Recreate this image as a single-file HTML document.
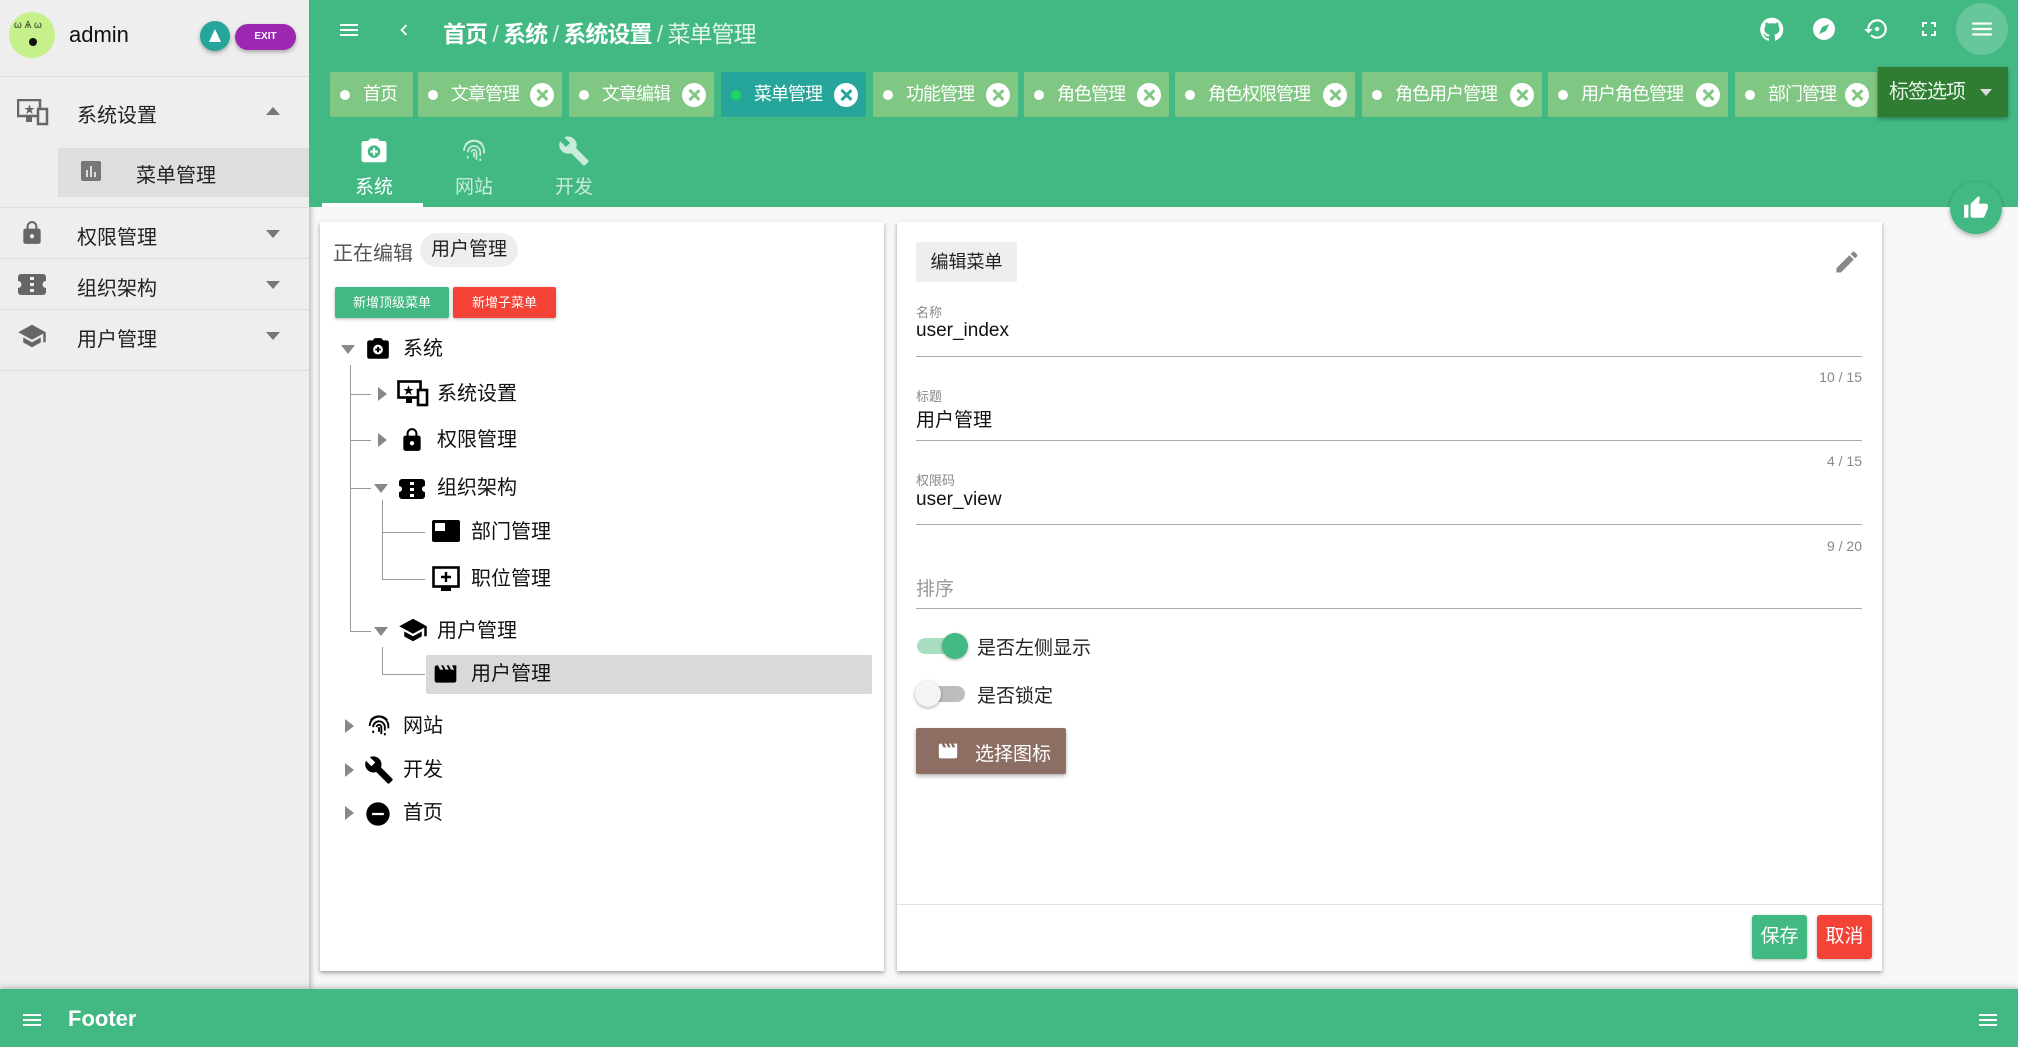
<!DOCTYPE html>
<html><head><meta charset="utf-8">
<style>
*{box-sizing:border-box;margin:0;padding:0}
body{width:2018px;height:1047px;overflow:hidden;background:#f7f7f7;font-family:"Liberation Sans","Noto Sans CJK SC",sans-serif;position:relative;color:#222}
.a{position:absolute}
.side{left:0;top:0;width:309px;height:989px;background:#eeeeee;box-shadow:2px 0 5px rgba(0,0,0,.25)}
.hdr{left:309px;top:0;width:1709px;height:207px;background:#42b883}
.tab{position:absolute;top:72px;height:45px;background:#81c784;color:#fff;font-size:18px;line-height:45px;padding-left:33px;border-radius:2px;letter-spacing:-1px;white-space:nowrap}
.tab:before{content:"";position:absolute;left:10px;top:18px;width:10px;height:10px;border-radius:50%;background:#fff}
.tab .x{position:absolute;right:8px;top:11px;width:24px;height:24px;border-radius:50%;background:#fff}
.tab .x:before,.tab .x:after{content:"";position:absolute;left:11px;top:5px;width:2.5px;height:14px;background:#81c784;transform:rotate(45deg)}
.tab .x:after{transform:rotate(-45deg)}
.tab.act{background:#26a69a}.tab.act:before{background:#1ed760}
.tab.act .x:before,.tab.act .x:after{background:#26a69a}
.card{background:#fff;box-shadow:0 2px 4px rgba(0,0,0,.35)}
.sm{font-size:20px;color:#222}
.tr{position:absolute;font-size:20px;color:#111;line-height:28px}
.ln{position:absolute;background:#999}
.arr{position:absolute;width:0;height:0}
.ad{border-left:7px solid transparent;border-right:7px solid transparent;border-top:9px solid #888}
.ar{border-top:7px solid transparent;border-bottom:7px solid transparent;border-left:9px solid #888}
.lbl{position:absolute;left:916px;font-size:13px;color:#888}
.val{position:absolute;left:916px;font-size:19px;color:#111}
.ul{position:absolute;left:916px;width:946px;height:1px;background:#aaa}
.cnt{position:absolute;right:156px;font-size:14px;color:#888}
</style></head><body>

<div class="a side"></div>
<div class="a" style="left:9px;top:12px;width:46px;height:46px;border-radius:50%;background:#c5f08a"></div>
<div class="a" style="left:29px;top:38px;width:8px;height:8px;border-radius:50%;background:#111"></div>
<div class="a" style="left:14px;top:20px;font-size:10px;color:#333">ω Ѧ ω</div>
<div class="a" style="left:69px;top:22px;font-size:22px;color:#111">admin</div>
<div class="a" style="left:200px;top:21px;width:30px;height:30px;border-radius:50%;background:#26a69a;box-shadow:0 2px 4px rgba(0,0,0,.3)"></div>
<div class="a" style="left:209px;top:29px;width:0;height:0;border-left:6px solid transparent;border-right:6px solid transparent;border-bottom:13px solid #fff"></div>
<div class="a" style="left:235px;top:24px;width:61px;height:26px;border-radius:13px;background:#9c27b0;color:#fff;font-size:10px;font-weight:bold;text-align:center;line-height:26px;box-shadow:0 2px 4px rgba(0,0,0,.3)">EXIT</div>
<div class="a" style="left:0;top:76px;width:309px;height:1px;background:#ddd"></div>

<svg class="a" style="left:17px;top:99px" width="32" height="28" viewBox="0 0 32 28"><rect x="1" y="1" width="22" height="16" fill="none" stroke="#666" stroke-width="2.5"/><rect x="9" y="17" width="6" height="6" fill="#666"/><rect x="21" y="10" width="9" height="15" fill="#eee" stroke="#666" stroke-width="2.5"/><text x="7" y="14" font-size="11" fill="#666">★</text></svg>
<div class="a sm" style="left:77px;top:99px">系统设置</div>
<div class="arr a" style="left:266px;top:107px;border-left:7px solid transparent;border-right:7px solid transparent;border-bottom:8px solid #777"></div>
<div class="a" style="left:58px;top:148px;width:251px;height:49px;background:#dedede"></div>
<svg class="a" style="left:81px;top:161px" width="20" height="20"><rect width="20" height="20" rx="2" fill="#777"/><rect x="5" y="9" width="2" height="7" fill="#dedede"/><rect x="9" y="5" width="2" height="11" fill="#dedede"/><rect x="13" y="11" width="2" height="5" fill="#dedede"/></svg>
<div class="a sm" style="left:136px;top:159px">菜单管理</div>
<div class="a" style="left:0;top:207px;width:309px;height:1px;background:#ddd"></div>
<svg class="a" style="left:19px;top:219px" width="26" height="28" viewBox="0 0 24 24"><path fill="#666" d="M18 8h-1V6c0-2.76-2.240-5-5-5S7 3.24 7 6v2H6c-1.1 0-2 .9-2 2v10c0 1.1.9 2 2 2h12c1.1 0 2-.9 2-2V10c0-1.1-.9-2-2-2zm-6 9c-1.1 0-2-.9-2-2s.9-2 2-2 2 .9 2 2-.9 2-2 2zm3.1-9H8.9V6c0-1.71 1.39-3.1 3.1-3.1 1.71 0 3.1 1.39 3.1 3.1v2z"/></svg>
<div class="a sm" style="left:77px;top:221px">权限管理</div>
<div class="arr a" style="left:266px;top:230px;border-left:7px solid transparent;border-right:7px solid transparent;border-top:8px solid #777"></div>
<div class="a" style="left:0;top:258px;width:309px;height:1px;background:#ddd"></div>
<svg class="a" style="left:18px;top:274px" width="28" height="21"><path fill="#666" d="M3 0h22a3 3 0 0 1 3 3v4a3 3 0 0 0 0 7v4a3 3 0 0 1-3 3H3a3 3 0 0 1-3-3v-4a3 3 0 0 0 0-7V3a3 3 0 0 1 3-3z"/><rect x="12" y="3" width="4" height="3" fill="#eee"/><rect x="12" y="9" width="4" height="3" fill="#eee"/><rect x="12" y="15" width="4" height="3" fill="#eee"/></svg>
<div class="a sm" style="left:77px;top:272px">组织架构</div>
<div class="arr a" style="left:266px;top:281px;border-left:7px solid transparent;border-right:7px solid transparent;border-top:8px solid #777"></div>
<div class="a" style="left:0;top:309px;width:309px;height:1px;background:#ddd"></div>
<svg class="a" style="left:17px;top:321px" width="30" height="30" viewBox="0 0 24 24"><path fill="#666" d="M5 13.18v4L12 21l7-3.82v-4L12 17l-7-3.82zM12 3L1 9l11 6 9-4.91V17h2V9L12 3z"/></svg>
<div class="a sm" style="left:77px;top:323px">用户管理</div>
<div class="arr a" style="left:266px;top:332px;border-left:7px solid transparent;border-right:7px solid transparent;border-top:8px solid #777"></div>
<div class="a" style="left:0;top:370px;width:309px;height:1px;background:#ddd"></div>

<div class="a hdr"></div>
<svg class="a" style="left:337px;top:18px" width="24" height="24" viewBox="0 0 24 24"><path fill="#fff" d="M3 18h18v-2H3v2zm0-5h18v-2H3v2zm0-7v2h18V6H3z"/></svg>
<svg class="a" style="left:393px;top:18px" width="22" height="24" viewBox="0 0 24 24"><path fill="#fff" d="M15.41 7.41L14 6l-6 6 6 6 1.41-1.41L10.83 12z"/></svg>
<div class="a" style="left:443px;top:15px;font-size:23px;color:#fff;white-space:nowrap;letter-spacing:-1px"><b>首页</b> <span style="opacity:.8">/</span> <b>系统</b> <span style="opacity:.8">/</span> <b>系统设置</b> <span style="opacity:.8">/</span> <span style="color:#e3f5ec">菜单管理</span></div>
<svg class="a" style="left:1759px;top:16px" width="26" height="27" viewBox="0 0 24 24"><path fill="#fff" d="M12 1a11 11 0 0 0-3.5 21.4c.6.1.7-.2.7-.5v-2c-3 .7-3.7-1.4-3.7-1.4-.5-1.3-1.2-1.6-1.2-1.6-1-.7.1-.7.1-.7 1.1.1 1.7 1.1 1.700 1.1 1 1.7 2.6 1.2 3.2.9.1-.7.4-1.2.7-1.500-2.4-.3-5-1.2-5-5.4 0-1.2.4-2.2 1.1-2.900-.1-.3-.5-1.4.1-2.900 0 0 .9-.3 3 1.100a10.5 10.5 0 0 1 5.5 0c2.1-1.4 3-1.1 3-1.1.6 1.5.2 2.6.1 2.9.7.8 1.1 1.7 1.1 2.9 0 4.2-2.6 5.1-5 5.4.4.3.8 1 .8 2v3c0 .3.2.6.8.5A11 11 0 0 0 12 1z"/></svg>
<svg class="a" style="left:1812px;top:17px" width="24" height="24" viewBox="0 0 24 24"><circle cx="12" cy="12" r="11" fill="#fff"/><path d="M17 7l-3 7-7 3 3-7z" fill="#42b883"/></svg>
<svg class="a" style="left:1863px;top:16px" width="26" height="26" viewBox="0 0 24 24"><path fill="#fff" d="M13 3a9 9 0 0 0-9 9H1l4 4 4-4H6a7 7 0 1 1 2.05 4.95l-1.42 1.42A9 9 0 1 0 13 3z"/><circle cx="13" cy="12" r="2" fill="#fff"/></svg>
<svg class="a" style="left:1917px;top:17px" width="24" height="24" viewBox="0 0 24 24"><path fill="#fff" d="M7 14H5v5h5v-2H7v-3zm-2-4h2V7h3V5H5v5zm12 7h-3v2h5v-5h-2v3zM14 5v2h3v3h2V5h-5z"/></svg>
<div class="a" style="left:1956px;top:3px;width:52px;height:52px;border-radius:50%;background:rgba(255,255,255,.2)"></div>
<svg class="a" style="left:1969px;top:16px" width="26" height="26" viewBox="0 0 24 24"><path fill="#fff" d="M3 18h18v-2H3v2zm0-5h18v-2H3v2zm0-7v2h18V6H3z"/></svg>

<div class="tab" style="left:330px;width:83px">首页</div>
<div class="tab" style="left:418px;width:144px">文章管理<span class="x"></span></div>
<div class="tab" style="left:569px;width:145px">文章编辑<span class="x"></span></div>
<div class="tab act" style="left:721px;width:145px">菜单管理<span class="x"></span></div>
<div class="tab" style="left:873px;width:145px">功能管理<span class="x"></span></div>
<div class="tab" style="left:1024px;width:145px">角色管理<span class="x"></span></div>
<div class="tab" style="left:1175px;width:180px">角色权限管理<span class="x"></span></div>
<div class="tab" style="left:1362px;width:180px">角色用户管理<span class="x"></span></div>
<div class="tab" style="left:1548px;width:180px">用户角色管理<span class="x"></span></div>
<div class="tab" style="left:1735px;width:142px">部门管理<span class="x"></span></div>
<div class="a" style="left:1878px;top:67px;width:130px;height:50px;background:#2e7d32;box-shadow:0 2px 4px rgba(0,0,0,.3);color:#e8f5e9;font-size:20px;line-height:50px;padding-left:11px;letter-spacing:-1px">标签选项</div>
<div class="arr a" style="left:1980px;top:89px;border-left:6px solid transparent;border-right:6px solid transparent;border-top:7px solid #ddd"></div>

<svg class="a" style="left:359px;top:136px" width="30" height="30" viewBox="0 0 24 24"><path fill="#fff" d="M9 2L7.2 4H4c-1.1 0-2 .9-2 2v13c0 1.1.9 2 2 2h16c1.1 0 2-.9 2-2V6c0-1.1-.9-2-2-2h-3.2L15 2z"/><circle cx="12" cy="12.5" r="5" fill="#42b883"/><path d="M12 9.5v6M9 12.5h6" stroke="#fff" stroke-width="1.8"/></svg>
<div class="a" style="left:355px;top:172px;font-size:19px;color:#fff">系统</div>
<div class="a" style="left:322px;top:203px;width:101px;height:4px;background:#fff"></div>
<svg class="a" style="left:459px;top:135px" width="30" height="32" viewBox="0 0 24 24" fill="none" stroke="#c8ecd9" stroke-width="1.4"><path d="M5 7a9 9 0 0 1 14 0M4 12a8 8 0 0 1 16 0v2M7 13a5 5 0 0 1 10 0v3M10 13a2 2 0 0 1 4 0v6M12 13v4M7 16v2M17 18v2"/></svg>
<div class="a" style="left:455px;top:172px;font-size:19px;color:#c8ecd9">网站</div>
<svg class="a" style="left:558px;top:134px" width="32" height="34" viewBox="0 0 24 24"><path fill="#c8ecd9" d="M22.7 19l-9.1-9.1c.9-2.3.4-5-1.5-6.9-2-2-5-2.4-7.4-1.3L9 6 6 9 1.6 4.7C.4 7.1.9 10.1 2.9 12.1c1.9 1.9 4.6 2.4 6.9 1.5l9.1 9.1c.4.4 1 .4 1.4 0l2.3-2.3c.5-.4.5-1.1.1-1.4z"/></svg>
<div class="a" style="left:555px;top:172px;font-size:19px;color:#c8ecd9">开发</div>

<div class="a" style="left:1950px;top:182px;width:52px;height:52px;border-radius:50%;background:#42b883;box-shadow:0 2px 5px rgba(0,0,0,.3)"></div>
<svg class="a" style="left:1963px;top:195px" width="26" height="26" viewBox="0 0 24 24"><path fill="#fff" d="M1 21h4V9H1v12zm22-11c0-1.1-.9-2-2-2h-6.31l.95-4.57.03-.32c0-.41-.17-.79-.44-1.06L14.17 1 7.59 7.59C7.22 7.95 7 8.45 7 9v10c0 1.1.9 2 2 2h9c.83 0 1.54-.5 1.79-1.22l3.020-7.05c.09-.23.14-.47.14-.73v-2z"/></svg>

<!-- left card -->
<div class="a card" style="left:320px;top:222px;width:564px;height:749px"></div>
<div class="a" style="left:333px;top:237px;font-size:20px;color:#555">正在编辑</div>
<div class="a" style="left:420px;top:233px;width:98px;height:34px;border-radius:17px;background:#eee;font-size:19px;line-height:34px;text-align:center;color:#222">用户管理</div>
<div class="a" style="left:335px;top:287px;width:114px;height:31px;background:#42b883;color:#fff;font-size:13px;line-height:31px;text-align:center;border-radius:2px;box-shadow:0 1px 3px rgba(0,0,0,.3)">新增顶级菜单</div>
<div class="a" style="left:453px;top:287px;width:103px;height:31px;background:#f44336;color:#fff;font-size:13px;line-height:31px;text-align:center;border-radius:2px;box-shadow:0 1px 3px rgba(0,0,0,.3)">新增子菜单</div>

<div class="ln" style="left:350px;top:365px;width:1px;height:267px"></div>
<div class="ln" style="left:350px;top:394px;width:21px;height:1px"></div>
<div class="ln" style="left:350px;top:440px;width:21px;height:1px"></div>
<div class="ln" style="left:350px;top:488px;width:21px;height:1px"></div>
<div class="ln" style="left:350px;top:631px;width:21px;height:1px"></div>
<div class="ln" style="left:382px;top:500px;width:1px;height:80px"></div>
<div class="ln" style="left:382px;top:532px;width:43px;height:1px"></div>
<div class="ln" style="left:382px;top:579px;width:43px;height:1px"></div>
<div class="ln" style="left:382px;top:647px;width:1px;height:28px"></div>
<div class="ln" style="left:382px;top:674px;width:43px;height:1px"></div>
<div class="a" style="left:426px;top:655px;width:446px;height:39px;background:#d9d9d9;border-radius:2px"></div>

<div class="arr a ad" style="left:341px;top:345px"></div>
<svg class="a" style="left:365px;top:336px" width="26" height="26" viewBox="0 0 24 24"><path fill="#000" d="M9 2L7.2 4H4c-1.1 0-2 .9-2 2v13c0 1.1.9 2 2 2h16c1.1 0 2-.9 2-2V6c0-1.1-.9-2-2-2h-3.2L15 2z"/><circle cx="12" cy="12.5" r="4.5" fill="#fff"/><path d="M12 10v5M9.5 12.5h5" stroke="#000" stroke-width="1.8"/></svg>
<div class="tr" style="left:403px;top:335px">系统</div>

<div class="arr a ar" style="left:378px;top:387px"></div>
<svg class="a" style="left:397px;top:380px" width="32" height="28" viewBox="0 0 32 28"><rect x="1.5" y="1.5" width="22" height="16" fill="none" stroke="#000" stroke-width="2.6"/><rect x="9" y="17" width="6" height="6" fill="#000"/><rect x="21" y="10" width="9" height="15" fill="#fff" stroke="#000" stroke-width="2.6"/><text x="6" y="14" font-size="11" fill="#000">★</text></svg>
<div class="tr" style="left:437px;top:380px">系统设置</div>

<div class="arr a ar" style="left:378px;top:433px"></div>
<svg class="a" style="left:399px;top:425px" width="26" height="30" viewBox="0 0 24 24"><path fill="#000" d="M18 8h-1V6c0-2.76-2.24-5-5-5S7 3.24 7 6v2H6c-1.1 0-2 .9-2 2v10c0 1.1.9 2 2 2h12c1.1 0 2-.9 2-2V10c0-1.1-.9-2-2-2zm-6 9c-1.1 0-2-.9-2-2s.9-2 2-2 2 .9 2 2-.9 2-2 2zm3.1-9H8.9V6c0-1.71 1.39-3.1 3.1-3.1 1.71 0 3.1 1.39 3.1 3.1v2z"/></svg>
<div class="tr" style="left:437px;top:426px">权限管理</div>

<div class="arr a ad" style="left:374px;top:484px"></div>
<svg class="a" style="left:399px;top:479px" width="26" height="20"><path fill="#000" d="M3 0h20a3 3 0 0 1 3 3v4a3 3 0 0 0 0 6v4a3 3 0 0 1-3 3H3a3 3 0 0 1-3-3v-4a3 3 0 0 0 0-6V3a3 3 0 0 1 3-3z"/><rect x="11" y="3" width="4" height="3" fill="#fff"/><rect x="11" y="9" width="4" height="3" fill="#fff"/><rect x="11" y="15" width="4" height="3" fill="#fff"/></svg>
<div class="tr" style="left:437px;top:474px">组织架构</div>

<svg class="a" style="left:432px;top:520px" width="28" height="24"><rect width="28" height="22" rx="2" fill="#000"/><rect x="3" y="3" width="10" height="8" fill="#fff"/></svg>
<div class="tr" style="left:471px;top:518px">部门管理</div>
<svg class="a" style="left:432px;top:566px" width="28" height="27"><rect x="1.5" y="1.5" width="25" height="19" fill="none" stroke="#000" stroke-width="2.6"/><rect x="9" y="20" width="10" height="5" fill="#000"/><path d="M14 6v10M9 11h10" stroke="#000" stroke-width="2.4"/></svg>
<div class="tr" style="left:471px;top:565px">职位管理</div>

<div class="arr a ad" style="left:374px;top:627px"></div>
<svg class="a" style="left:398px;top:615px" width="30" height="30" viewBox="0 0 24 24"><path fill="#000" d="M5 13.18v4L12 21l7-3.82v-4L12 17l-7-3.82zM12 3L1 9l11 6 9-4.91V17h2V9L12 3z"/></svg>
<div class="tr" style="left:437px;top:617px">用户管理</div>

<svg class="a" style="left:432px;top:661px" width="27" height="26" viewBox="0 0 24 24"><path fill="#000" d="M18 4l2 4h-3l-2-4h-2l2 4h-3l-2-4H8l2 4H7L5 4H4c-1.1 0-1.99.9-1.99 2L2 18c0 1.1.9 2 2 2h16c1.1 0 2-.9 2-2V4h-4z"/></svg>
<div class="tr" style="left:471px;top:660px">用户管理</div>

<div class="arr a ar" style="left:345px;top:719px"></div>
<svg class="a" style="left:365px;top:712px" width="28" height="28" viewBox="0 0 24 24" fill="none" stroke="#000" stroke-width="1.6"><path d="M5 7a9 9 0 0 1 14 0M4 12a8 8 0 0 1 16 0v2M7 13a5 5 0 0 1 10 0v3M10 13a2 2 0 0 1 4 0v6M12 13v4M7 16v2M17 18v2"/></svg>
<div class="tr" style="left:403px;top:712px">网站</div>

<div class="arr a ar" style="left:345px;top:763px"></div>
<svg class="a" style="left:364px;top:754px" width="30" height="32" viewBox="0 0 24 24"><path fill="#000" d="M22.7 19l-9.1-9.1c.9-2.3.4-5-1.5-6.9-2-2-5-2.4-7.4-1.3L9 6 6 9 1.6 4.7C.4 7.1.9 10.1 2.9 12.1c1.9 1.9 4.6 2.4 6.9 1.5l9.1 9.1c.4.4 1 .4 1.4 0l2.3-2.3c.5-.4.5-1.1.1-1.4z"/></svg>
<div class="tr" style="left:403px;top:756px">开发</div>

<div class="arr a ar" style="left:345px;top:806px"></div>
<svg class="a" style="left:364px;top:800px" width="28" height="28" viewBox="0 0 24 24"><path fill="#000" d="M12 2C6.48 2 2 6.48 2 12s4.48 10 10 10 10-4.48 10-10S17.52 2 12 2zm5 11H7v-2h10v2z"/></svg>
<div class="tr" style="left:403px;top:799px">首页</div>

<!-- right card -->
<div class="a card" style="left:897px;top:222px;width:985px;height:749px"></div>
<div class="a" style="left:916px;top:242px;width:101px;height:40px;background:#eee;font-size:18px;line-height:40px;text-align:center;color:#222">编辑菜单</div>
<svg class="a" style="left:1833px;top:248px" width="28" height="28" viewBox="0 0 24 24"><path fill="#888" d="M3 17.25V21h3.75L17.81 9.94l-3.75-3.75L3 17.25zM20.71 7.04c.39-.39.39-1.02 0-1.41l-2.34-2.34c-.39-.39-1.02-.39-1.41 0l-1.83 1.83 3.75 3.75 1.83-1.83z"/></svg>

<div class="lbl" style="top:302px">名称</div>
<div class="val" style="top:320px">user_index</div>
<div class="ul" style="top:356px"></div>
<div class="cnt" style="top:369px">10 / 15</div>
<div class="lbl" style="top:386px">标题</div>
<div class="val" style="top:405px">用户管理</div>
<div class="ul" style="top:440px"></div>
<div class="cnt" style="top:453px">4 / 15</div>
<div class="lbl" style="top:470px">权限码</div>
<div class="val" style="top:489px">user_view</div>
<div class="ul" style="top:524px"></div>
<div class="cnt" style="top:538px">9 / 20</div>
<div class="a" style="left:916px;top:574px;font-size:19px;color:#999">排序</div>
<div class="ul" style="top:608px"></div>

<div class="a" style="left:917px;top:638px;width:48px;height:16px;border-radius:8px;background:#a8dfc3"></div>
<div class="a" style="left:942px;top:633px;width:26px;height:26px;border-radius:50%;background:#42b883;box-shadow:0 1px 3px rgba(0,0,0,.3)"></div>
<div class="a" style="left:977px;top:633px;font-size:19px;color:#222">是否左侧显示</div>
<div class="a" style="left:917px;top:686px;width:48px;height:16px;border-radius:8px;background:#bdbdbd"></div>
<div class="a" style="left:915px;top:681px;width:26px;height:26px;border-radius:50%;background:#f5f5f5;box-shadow:0 1px 3px rgba(0,0,0,.35)"></div>
<div class="a" style="left:977px;top:681px;font-size:19px;color:#222">是否锁定</div>

<div class="a" style="left:916px;top:728px;width:150px;height:46px;background:#8d6e63;border-radius:2px;box-shadow:0 2px 4px rgba(0,0,0,.3)"></div>
<svg class="a" style="left:937px;top:740px" width="22" height="22" viewBox="0 0 24 24"><path fill="#fff" d="M18 4l2 4h-3l-2-4h-2l2 4h-3l-2-4H8l2 4H7L5 4H4c-1.1 0-1.99.9-1.99 2L2 18c0 1.1.9 2 2 2h16c1.1 0 2-.9 2-2V4h-4z"/></svg>
<div class="a" style="left:975px;top:739px;font-size:19px;color:#fff">选择图标</div>

<div class="a" style="left:897px;top:904px;width:985px;height:1px;background:#e0e0e0"></div>
<div class="a" style="left:1752px;top:915px;width:55px;height:44px;background:#42b883;color:#fff;font-size:19px;line-height:44px;text-align:center;border-radius:3px;box-shadow:0 1px 3px rgba(0,0,0,.3)">保存</div>
<div class="a" style="left:1817px;top:915px;width:55px;height:44px;background:#f44336;color:#fff;font-size:19px;line-height:44px;text-align:center;border-radius:3px;box-shadow:0 1px 3px rgba(0,0,0,.3)">取消</div>

<!-- footer -->
<div class="a" style="left:0;top:989px;width:2018px;height:58px;background:#42b883;box-shadow:0 -2px 5px rgba(0,0,0,.2)"></div>
<svg class="a" style="left:20px;top:1008px" width="24" height="24" viewBox="0 0 24 24"><path fill="#fff" d="M3 18h18v-2H3v2zm0-5h18v-2H3v2zm0-7v2h18V6H3z"/></svg>
<div class="a" style="left:68px;top:1006px;font-size:22px;font-weight:bold;color:#fff">Footer</div>
<svg class="a" style="left:1976px;top:1008px" width="24" height="24" viewBox="0 0 24 24"><path fill="#fff" d="M3 18h18v-2H3v2zm0-5h18v-2H3v2zm0-7v2h18V6H3z"/></svg>
</body></html>
